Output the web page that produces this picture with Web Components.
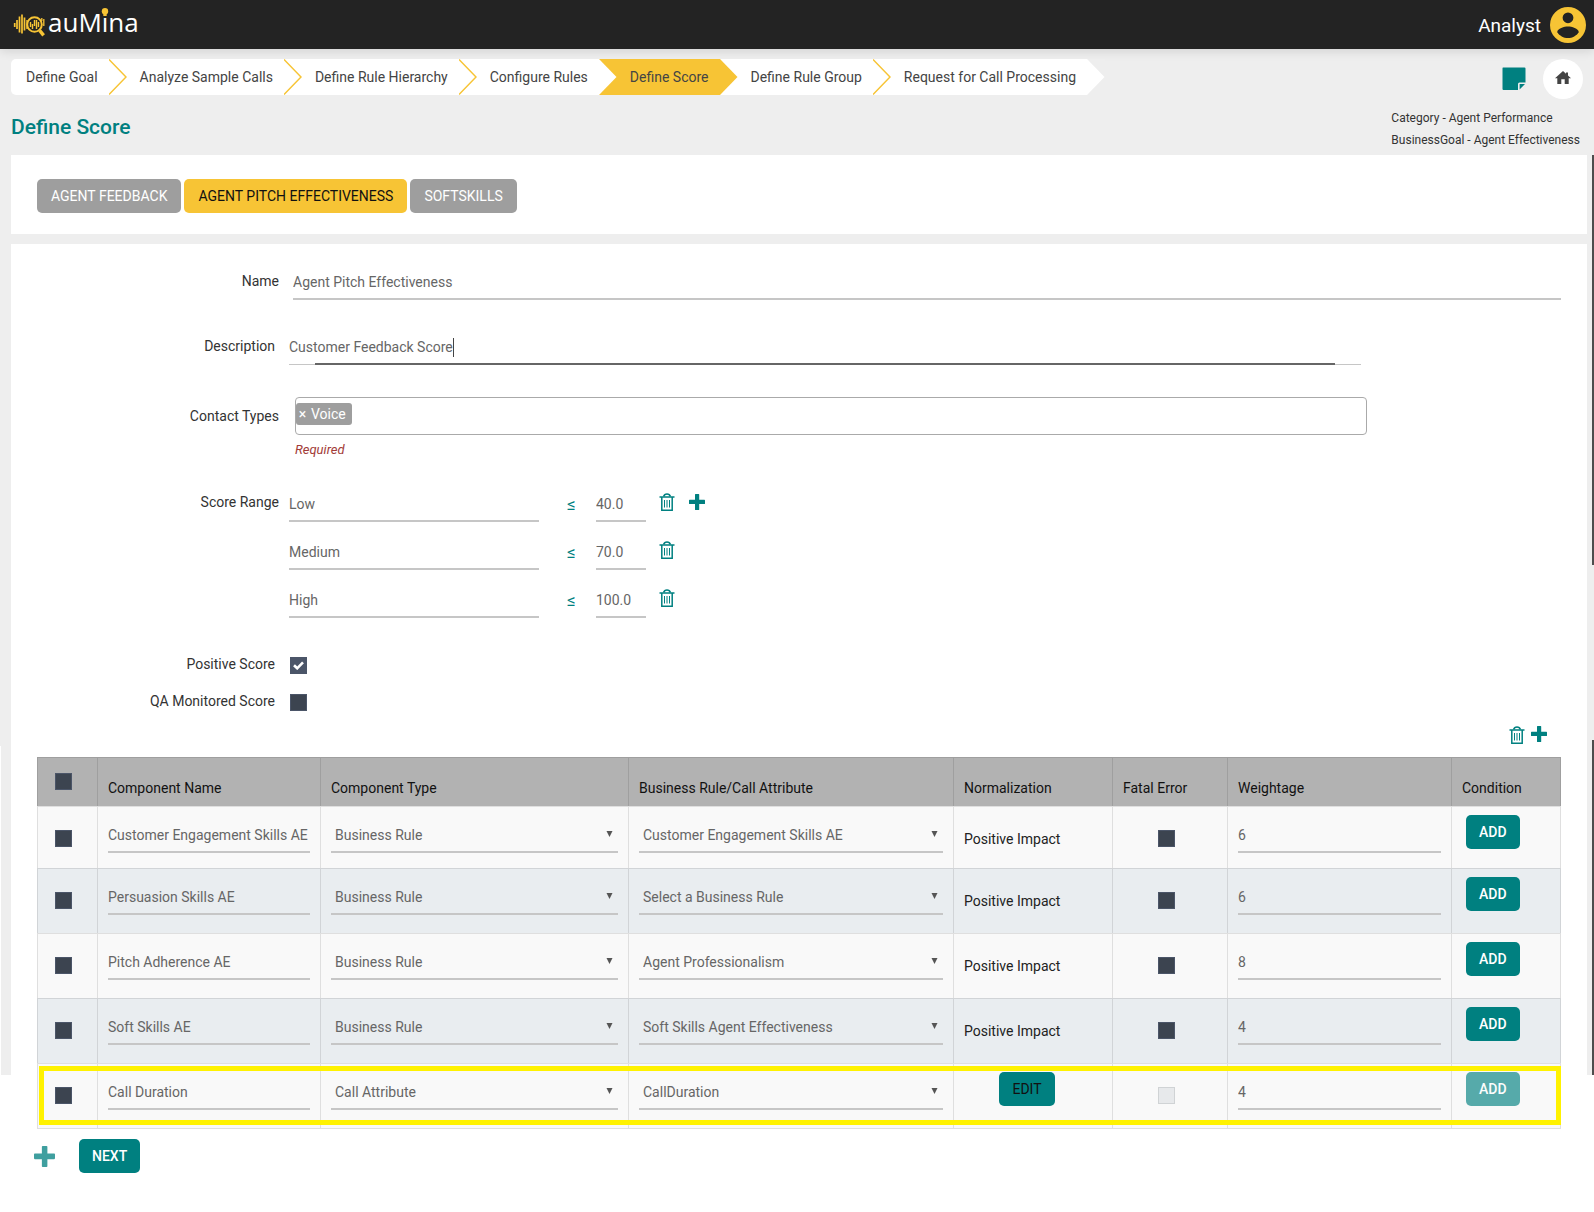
<!DOCTYPE html>
<html lang="en">
<head>
<meta charset="utf-8">
<title>auMina - Define Score</title>
<style>
  html { background: #fff; }
  body { margin: 0; font: 14px/20px Roboto, "Liberation Sans", sans-serif; color: #333; }
</style>
</head>
<body>
<score-page></score-page>

<script>
const teal = '#008080';

/* Styles that every element with form controls starts from */
const base = `
  *, *::before, *::after { box-sizing: border-box; }
  input, select, button { font: inherit; margin: 0; }
  input:focus, select:focus { outline: none; }
  .line {
    display: block; width: 100%; height: 34px; padding: 0; border: 0;
    border-bottom: 2px solid #c6c6c6; border-radius: 0; background: transparent; color: #666;
  }
  input[type=checkbox] {
    appearance: none; display: block; width: 17px; height: 17px;
    background: #3c4450; border: 1px solid #4b5568;
  }
  input[type=checkbox]:checked { background: #4b5568; }
  input[type=checkbox]:disabled { background: #e7e9eb; border-color: #d0d3d5; }
  .btn {
    height: 34px; padding: 0 13px; border: 0; border-radius: 5px;
    background: ${teal}; color: #fff; font-weight: 500; white-space: nowrap;
  }
  .bare { display: block; padding: 0; border: 0; background: none; color: ${teal}; cursor: pointer; }
`;

function define(name, css, html) {
  const tpl = document.createElement('template');
  customElements.define(name, class extends HTMLElement {
    constructor() {
      super();
      this.attachShadow({ mode: 'open' });
    }
    connectedCallback() {
      tpl.innerHTML = `<style>${base}${css}</style>${typeof html === 'function' ? html(this) : html}`;
      this.shadowRoot.replaceChildren(tpl.content.cloneNode(true));
    }
  });
}

/* Icons */
const glyphs = {
  trash: [16, 18, `<g fill="none" stroke="currentColor"><path stroke-width="1.5" d="M0.5 4h15M2.8 4.5v12.7h10.4V4.5"/><path stroke-width="1.6" d="M4.6 3.6C5.2 1.6 6 1 8 1s2.8.6 3.4 2.6"/><path stroke-width="1" d="M5.5 7v7.5M8 7v7.5M10.5 7v7.5"/></g>`],
  plus: [16, 16, `<path fill="currentColor" d="M6 0.6Q6 0 6.6 0H9.6Q10.2 0 10.2 .6V5.8H15.4Q16 5.8 16 6.4V9.4Q16 10 15.4 10H10.2V15.4Q10.2 16 9.6 16H6.6Q6 16 6 15.4V10H.6Q0 10 0 9.4V6.4Q0 5.8.6 5.8H6Z"/>`],
  note: [24, 24, `<path fill="currentColor" d="M1 .5H22.5Q23.5 .5 23.5 1.5V15.5H17.5Q16 15.5 16 17V23H1.500Q.5 23 .5 22V1.500Q.5 .5 1 .5Z"/><path fill="currentColor" d="M17.600 17H23L17.600 22.600Z"/>`],
  home: [16, 13, `<path fill="currentColor" d="M8 0 0 7.200h2.300V13h4V8.300h3.400V13h4V7.200H16L13 4.500V1.400h-2v1.300Z"/>`],
  user: [36, 36, `<path fill="#f7c435" fill-rule="evenodd" d="M18 0a18 18 0 1 0 0 36 18 18 0 0 0 0-36ZM18 5.400a5.400 5.400 0 1 1 0 10.800 5.400 5.400 0 0 1 0-10.800ZM18 31C13.500 31 9.500 28.700 7.200 25.200 7.300 21.600 14.400 19.600 18 19.600s10.700 2 10.800 5.600C26.500 28.700 22.500 31 18 31Z"/>`],
  check: [11, 9, `<path fill="none" stroke="#fff" stroke-width="2.600" d="M1 4.200 4.200 7.300 10 1.400"/>`],
  caret: [7, 6, `<path fill="#555" d="M.5 0H6.500L3.500 6Z"/>`],
};
define('ui-icon', `:host { display: block; } svg { display: block; }`, el => {
  const [w, h, body] = glyphs[el.getAttribute('name')];
  const s = Number(el.getAttribute('scale') || 1);
  return `<svg width="${Math.round(w * s)}" height="${Math.round(h * s)}" viewBox="0 0 ${w} ${h}" aria-hidden="true">${body}</svg>`;
});

/* Brand */
define('brand-logo', `
  :host { display: block; } svg { display: block; }
  text { font: 26px "Open Sans", sans-serif; fill: #fff; }
`, `<svg width="136" height="49" viewBox="12 0 136 49" role="img" aria-label="auMina">
  <g stroke="#f7c435" fill="none">
    <path stroke-width="1.700" d="M14.700 23v4M17 20v9M19.500 16.500v16M22 14.500v19M24.500 17.500v13"/>
    <circle cx="34.500" cy="24.500" r="7.300" stroke-width="2"/>
    <path stroke-width="3.400" d="M39.600 30.400l4 5"/>
    <path stroke-width="1.400" d="M30.500 22v5M32.500 24v5M34.500 20v6M36.500 20v9M38.500 22v5M27 20v9"/>
    <path stroke-width="1.300" d="M43.800 19v7M41.800 18v3"/>
  </g>
  <text x="48" y="32">auMina</text>
  <rect x="102" y="8" width="9" height="9" fill="#232323"/>
  <circle cx="105" cy="11.200" r="3.200" fill="#f7c435"/>
  <path d="M103.300 13h3.400v3h-3.400Z" fill="#f7c435"/>
</svg>`);

define('app-header', `
  :host { display: flex; justify-content: space-between; align-items: center; height: 49px;
    padding: 0 8px 0 12px; background: #232323; color: #fff; box-shadow: 0 2px 10px rgba(0,0,0,.12); }
  .user { display: flex; align-items: center; gap: 9px; font-size: 19px; line-height: 24px; }
  .user span { padding-top: 2px; }
  ui-icon { padding-top: 1px; }
`, `<brand-logo></brand-logo><div class="user"><span><slot></slot></span><ui-icon name="user"></ui-icon></div>`);

/* Step trail: each step ends in a pointed edge filled with its own colour */
define('trail-step', `
  :host { display: flex; height: 36px; color: #444; --own: #fff; background: var(--own); }
  :host([current]) { --own: #f7c435; }
  :host([first]) { border-radius: 5px 0 0 5px; }
  a { padding: 1px 11px 0 13px; line-height: 35px; color: inherit; text-decoration: none; white-space: nowrap; }
  :host([first]) a { padding-left: 15px; }
  svg { display: block; background: var(--next, #fff); }
  :host([edge=gold]) { --next: #f7c435; }
  :host([edge=none]) { --next: #eee; }
`, el => `<a href="#"><slot></slot></a>
  <svg width="18" height="36" viewBox="0 0 18 36"><path d="M0 0 17.500 18 0 36Z" fill="var(--own)"/>
  ${el.hasAttribute('edge') || el.hasAttribute('current') ? '' : '<path d="M0 .5 17 18 0 35.500" fill="none" stroke="#f7c435" stroke-width="1.500"/>'}</svg>`);

define('step-trail', `:host { display: flex; }`, `<slot></slot>`);

define('page-top', `
  :host { display: flex; justify-content: space-between; align-items: flex-start; padding: 10px 11px 4px 11px; }
  h1 { margin: 20px 0 0; font-size: 21px; line-height: 24px; font-weight: 500; color: ${teal}; }
  .tools { display: flex; align-items: center; justify-content: flex-end; gap: 17px; height: 40px; color: ${teal}; }
  .home { display: grid; place-items: center; width: 40px; height: 40px; padding-bottom: 4px; border-radius: 50%; background: #fff; color: #444; }
  .meta { margin: 8px 0 0; padding-right: 3px; font-size: 12px; line-height: 22px; color: #333; }
  .meta div { white-space: nowrap; }
`, `<div>
    <step-trail>
      <trail-step first>Define Goal</trail-step><trail-step>Analyze Sample Calls</trail-step>
      <trail-step>Define Rule Hierarchy</trail-step><trail-step edge="gold">Configure Rules</trail-step>
      <trail-step current>Define Score</trail-step><trail-step>Define Rule Group</trail-step>
      <trail-step edge="none">Request for Call Processing</trail-step>
    </step-trail>
    <h1>Define Score</h1>
  </div>
  <div>
    <div class="tools">
      <button class="bare" aria-label="Notes"><ui-icon name="note"></ui-icon></button>
      <a class="home" href="#" aria-label="Home"><ui-icon name="home"></ui-icon></a>
    </div>
    <div class="meta"><div>Category - Agent Performance</div><div>BusinessGoal - Agent Effectiveness</div></div>
  </div>`);

define('score-tabs', `
  :host { display: flex; gap: 3px; padding: 24px 26px 21px; background: #fff; }
  .btn { padding: 0 14px; background: #9e9e9e; font-weight: 400; }
  .btn.on { background: #f7c435; color: #111; }
`, `<button class="btn">AGENT FEEDBACK</button><button class="btn on">AGENT PITCH EFFECTIVENESS</button><button class="btn">SOFTSKILLS</button>`);

/* Label column plus control column; the "near" rows sit a little to the left */
define('score-form', `
  :host { display: block; color: #333; }
  .row { display: grid; grid-template-columns: 242px minmax(0, 1fr); column-gap: 14px; }
  .near { grid-template-columns: 238px minmax(0, 1fr); }
  .row > label, .caption { text-align: right; line-height: 30px; }
  .desc { margin-top: 31px; padding-right: 200px; }
  .typing { display: flex; align-items: center; height: 34px; padding-bottom: 2px;
    background: linear-gradient(#666, #666) center bottom / calc(100% - 52px) 2px no-repeat,
      linear-gradient(#c6c6c6, #c6c6c6) bottom / 100% 1px no-repeat; }
  .typing input { field-sizing: content; padding: 0; border: 0; background: none; color: #666; }
  .typing i { width: 1px; height: 19px; background: #444; }
  .types { column-gap: 16px; margin-top: 32px; padding-right: 194px; }
  .types > .caption { line-height: 38px; }
  .box { height: 38px; padding-top: 5px; border: 1px solid #aaa; border-radius: 4px; }
  .chip { display: flex; width: max-content; align-items: center; gap: 4px; height: 22px; padding: 0 6px 0 2px;
    border-radius: 3px; background: #9e9e9e; color: #fff; line-height: 20px; }
  .chip button { padding: 0; border: 0; background: none; color: #fff; width: 9px; line-height: 20px; }
  .hint { margin-top: 6px; font-size: 13px; line-height: 18px; font-style: italic; color: #a23b38; }
  .ranges-row { column-gap: 10px; margin-top: 29px; }
  .ranges-row > .caption { line-height: 28px; }
  .ranges { display: grid; gap: 14px; }
  .range { display: grid; grid-template-columns: 250px 57px 50px 42px 18px; }
  .range span { padding-left: 8px; color: ${teal}; font-size: 17px; line-height: 32px; text-align: center; }
  .range .bare { height: 28px; display: grid; place-items: center; }
  .check { column-gap: 15px; margin-top: 20px; height: 17px; }
  .check.first { margin-top: 39px; }
  .check > label { line-height: 15px; }
  .tick { display: grid; width: 17px; height: 17px; }
  .tick > * { grid-area: 1 / 1; }
  .tick ui-icon { place-self: center; pointer-events: none; }
`, () => {
  const range = (name, value, first) => `<div class="range">
    <input class="line" aria-label="Range name" value="${name}"><span>≤</span>
    <input class="line" aria-label="Upper limit" value="${value}">
    <button class="bare" aria-label="Delete range"><ui-icon name="trash"></ui-icon></button>
    ${first ? '<button class="bare" aria-label="Add range"><ui-icon name="plus"></ui-icon></button>' : ''}</div>`;
  return `
  <div class="row"><label for="name">Name</label><input id="name" class="line" value="Agent Pitch Effectiveness"></div>
  <div class="row near desc"><label for="desc">Description</label>
    <div class="typing"><input id="desc" value="Customer Feedback Score"><i></i></div></div>
  <div class="row types"><div class="caption">Contact Types</div>
    <div><div class="box"><span class="chip"><button aria-label="Remove Voice">×</button>Voice</span></div>
      <div class="hint">Required</div></div></div>
  <div class="row ranges-row"><div class="caption">Score Range</div>
    <div class="ranges">${range('Low', '40.0', true)}${range('Medium', '70.0')}${range('High', '100.0')}</div></div>
  <div class="row near check first"><label for="pos">Positive Score</label>
    <div class="tick"><input type="checkbox" id="pos" checked><ui-icon name="check"></ui-icon></div></div>
  <div class="row near check"><label for="qa">QA Monitored Score</label><input type="checkbox" id="qa"></div>`;
});

define('component-table', `
  :host { display: block; }
  .tools { display: flex; justify-content: flex-end; align-items: flex-start; gap: 6px; height: 18px; margin: 15px 14px 13px 0; }
  table { width: 100%; table-layout: fixed; border-spacing: 0; color: #333; }
  th, td { padding: 0 10px; vertical-align: top; text-align: left; font-weight: 400;
    border: 0 solid rgba(0,0,0,.1); border-width: 1px 0 0 1px; }
  th:last-child, td:last-child { border-right-width: 1px; }
  th { height: 49px; padding-top: 20px; background: #b2b2b2; color: #111; }
  td { height: 65px; background: #f9f9f9; }
  tr:first-child td { height: 62px; }
  tbody tr:last-child td { height: 66px; border-bottom-width: 1px; }
  tr:nth-child(even) td { background: #e9edf0; }
  tr > .pick { padding: 23px 0 0 17px; }
  th.pick { padding-top: 15px; }
  .fieldcell { padding-top: 12px; }
  .text { padding-top: 22px; color: #222; }
  .fatal { padding: 23px 18px 0 10px; }
  .fatal input { margin: 0 auto; }
  .act { padding: 8px 0 0 14px; }
  .edit { padding: 8px 22px 0 10px; text-align: center; }
  .edit .btn { color: #111; font-weight: 400; }
  td .btn { display: inline-block; vertical-align: top; }
  .btn:disabled { opacity: .65; }
  .pickone { display: grid; }
  .pickone > * { grid-area: 1 / 1; }
  .pickone select { appearance: none; padding-left: 4px; }
  .pickone ui-icon { place-self: center end; padding: 0 5px 5px 0; pointer-events: none; }
  .marked { position: relative; }
  .frame { position: absolute; inset: 3px 0 4px 2px; border: 5px solid #fff200; pointer-events: none; }
`, () => {
  const rows = [
    ['Customer Engagement Skills AE', 'Business Rule', 'Customer Engagement Skills AE', 6],
    ['Persuasion Skills AE', 'Business Rule', 'Select a Business Rule', 6],
    ['Pitch Adherence AE', 'Business Rule', 'Agent Professionalism', 8],
    ['Soft Skills AE', 'Business Rule', 'Soft Skills Agent Effectiveness', 4],
    ['Call Duration', 'Call Attribute', 'CallDuration', 4, true],
  ];
  const select = (label, v) => `<td class="fieldcell"><div class="pickone"><select class="line" aria-label="${label}"><option>${v}</option></select><ui-icon name="caret"></ui-icon></div></td>`;
  return `<div class="tools">
    <button class="bare" aria-label="Delete selected"><ui-icon name="trash"></ui-icon></button>
    <button class="bare" aria-label="Add component"><ui-icon name="plus"></ui-icon></button></div>
  <table>
    <colgroup><col style="width:60px"><col style="width:223px"><col style="width:308px"><col style="width:325px"><col style="width:159px"><col style="width:115px"><col style="width:224px"><col style="width:110px"></colgroup>
    <thead><tr><th class="pick"><input type="checkbox" aria-label="Select all"></th><th>Component Name</th><th>Component Type</th><th>Business Rule/Call Attribute</th><th>Normalization</th><th>Fatal Error</th><th>Weightage</th><th>Condition</th></tr></thead>
    <tbody>${rows.map(([name, type, rule, weight, marked]) => `<tr class="${marked ? 'marked' : ''}">
      <td class="pick"><input type="checkbox" aria-label="Select ${name}">${marked ? '<span class="frame"></span>' : ''}</td>
      <td class="fieldcell"><input class="line" aria-label="Component name" value="${name}"></td>
      ${select('Component type', type)}${select('Business rule', rule)}
      ${marked ? '<td class="edit"><button class="btn">EDIT</button></td>' : '<td class="text">Positive Impact</td>'}
      <td class="fatal"><input type="checkbox" aria-label="Fatal error"${marked ? ' disabled' : ''}></td>
      <td class="fieldcell"><input class="line" aria-label="Weightage" value="${weight}"></td>
      <td class="act"><button class="btn"${marked ? ' disabled' : ''}>ADD</button></td></tr>`).join('')}</tbody>
  </table>`;
});

define('form-footer', `
  :host { display: flex; align-items: center; gap: 24px; margin-top: 10px; }
  .faded { opacity: .75; margin-left: -3px; }
`, `<button class="bare faded" aria-label="Add row"><ui-icon name="plus" scale="1.300"></ui-icon></button><button class="btn">NEXT</button>`);

/* Grey canvas ends part-way down; dark scroll strips run along its right side */
define('score-page', `
  :host { display: block; background:
    linear-gradient(#4d4d4d, #4d4d4d) right 0 top 155px / 2px 410px no-repeat,
    linear-gradient(#4d4d4d, #4d4d4d) right 0 top 740px / 2px 335px no-repeat,
    linear-gradient(#fff, #fff) 0 746px / 1px 329px no-repeat,
    linear-gradient(#eee, #eee) 0 0 / 100% 1075px no-repeat; }
  main { padding: 0 7px 38px 11px; }
  page-top { margin: 0 -7px 0 -11px; }
  .panel { margin-top: 10px; padding: 22px 26px 0; background: #fff; }
`, `<app-header>Analyst</app-header>
  <main>
    <page-top></page-top>
    <score-tabs></score-tabs>
    <section class="panel"><score-form></score-form><component-table></component-table><form-footer></form-footer></section>
  </main>`);
</script>
</body>
</html>
